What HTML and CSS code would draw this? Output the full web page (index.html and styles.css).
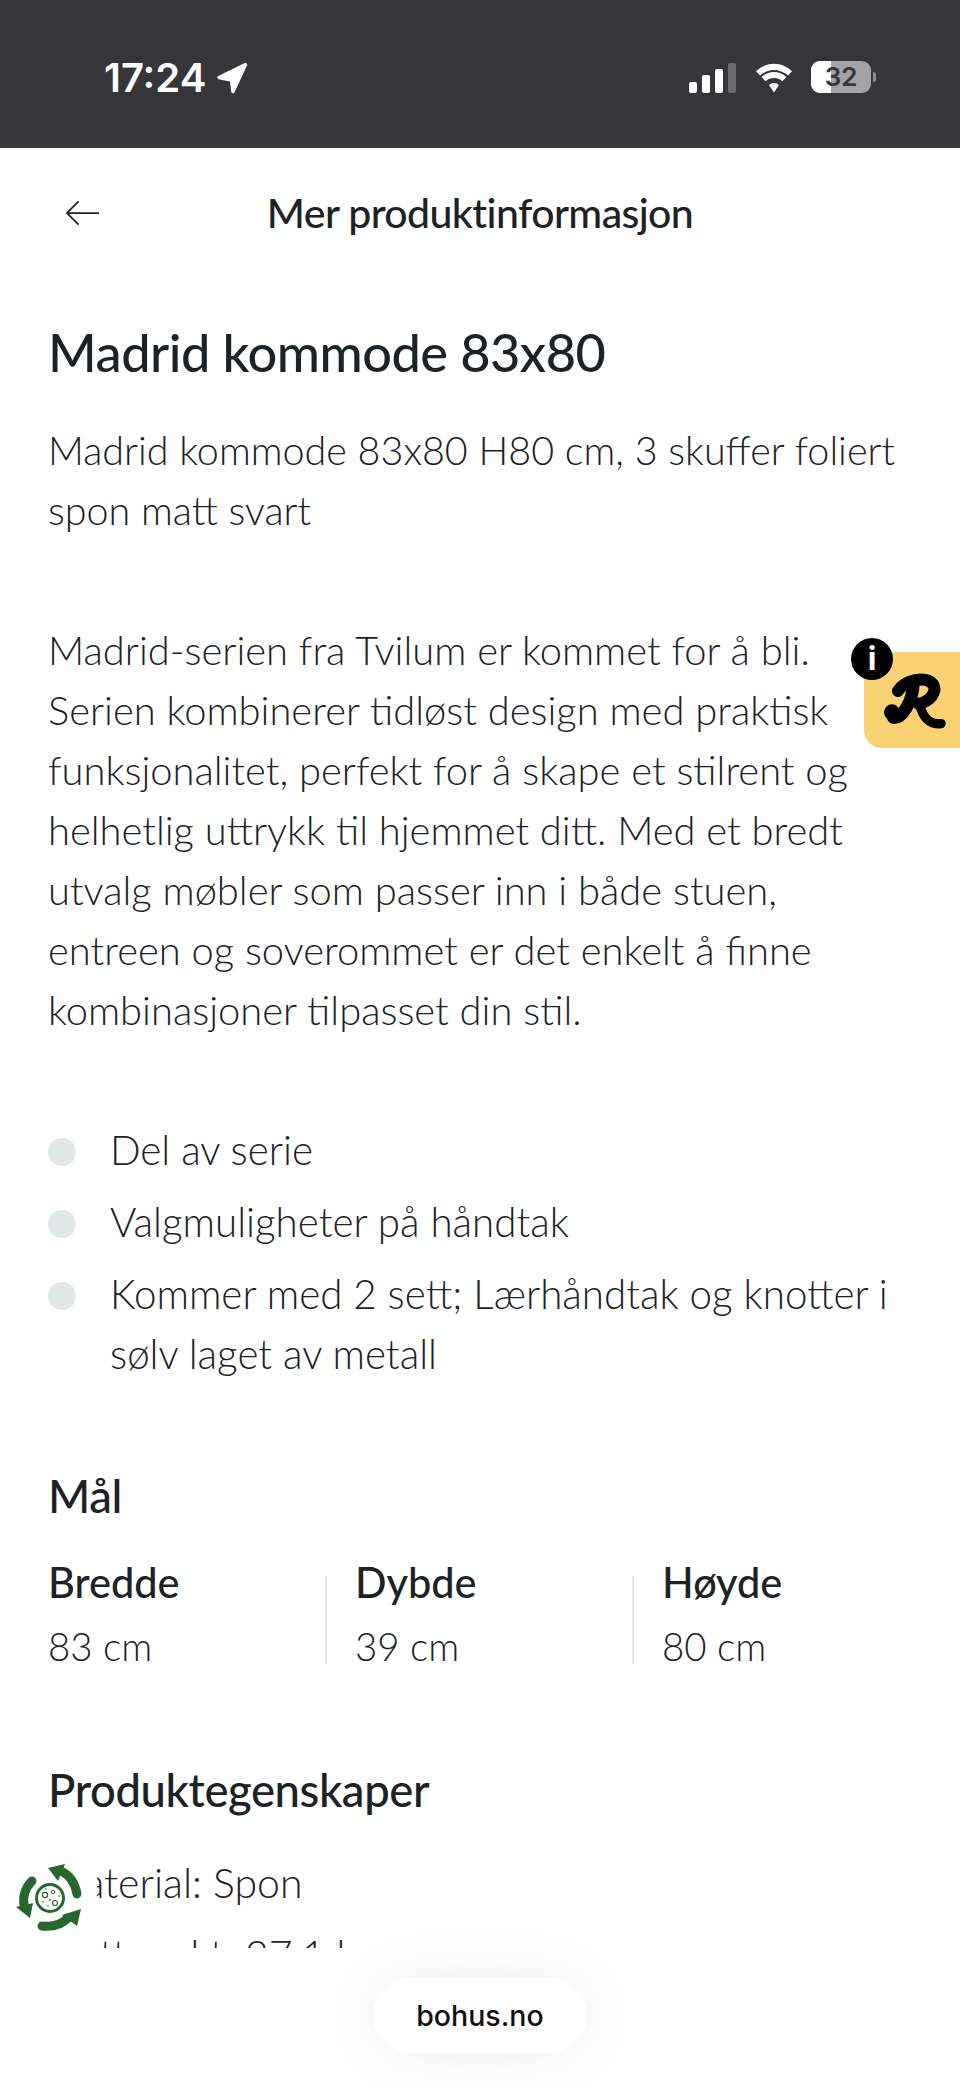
FILE: index.html
```html
<!DOCTYPE html>
<html lang="no">
<head>
<meta charset="utf-8">
<title>Mer produktinformasjon</title>
<link rel="stylesheet" href="styles.css">
</head>
<body>
<div class="phone">
  <div class="status">
    <div class="status-left">
      <span class="time">17:24</span>
      <svg class="loc" viewBox="0 0 32 32"><path d="M29.500 2.500 3 15.500l12.500 2.500 1.500 11.500Z" fill="#fff" stroke="#fff" stroke-width="3.500" stroke-linejoin="round"/></svg>
    </div>
    <div class="status-right">
      <svg class="signal" viewBox="0 0 47 30"><rect x="0" y="19" width="8" height="11" rx="2" fill="#fff"/><rect x="13" y="12" width="8" height="18" rx="2" fill="#fff"/><rect x="26" y="6" width="8" height="24" rx="2" fill="#fff"/><rect x="39" y="0" width="8" height="30" rx="2" fill="#6c6b70"/></svg>
      <svg class="wifi" viewBox="0 0 40 30"><path d="M20 7c5 0 10 2 14 5.500l4-4.200C33 3.500 26.500 .8 20 .8S7 3.500 2 8.300l4 4.200C10 9 15 7 20 7Z" fill="#fff"/><path d="M20 15c3 0 6 1.200 8.400 3.200l4-4.200C28.800 10.700 24.500 9 20 9s-8.800 1.700-12.400 5l4 4.200C14 16.200 17 15 20 15Z" fill="#fff"/><path d="M20 20c-2 0-3.700.7-5 2L20 29.500 25 22c-1.300-1.300-3-2-5-2Z" fill="#fff"/></svg>
      <div class="battery">
        <div class="battery-body"><span class="battery-level"></span><span class="battery-num">32</span></div>
        <span class="battery-cap"></span>
      </div>
    </div>
  </div>

  <header class="topbar">
    <svg class="back" viewBox="0 0 36 26"><path d="M35 13H2M14 1 2 13l12 12" fill="none" stroke="#1c2226" stroke-width="1.800"/></svg>
    <h2 class="topbar-title">Mer produktinformasjon</h2>
  </header>

  <main class="content">
    <h1 class="title">Madrid kommode 83x80</h1>
    <p class="text lead">Madrid kommode 83x80 H80 cm, 3 skuffer foliert spon matt svart</p>
    <p class="text body-copy">Madrid-serien fra Tvilum er kommet for å bli. Serien kombinerer tidløst design med praktisk funksjonalitet, perfekt for å skape et stilrent og helhetlig uttrykk til hjemmet ditt. Med et bredt utvalg møbler som passer inn i både stuen, entreen og soverommet er det enkelt å finne kombinasjoner tilpasset din stil.</p>
    <ul class="bullets">
      <li>Del av serie</li>
      <li>Valgmuligheter på håndtak</li>
      <li>Kommer med 2 sett; Lærhåndtak og knotter i sølv laget av metall</li>
    </ul>
    <h3 class="section">Mål</h3>
    <div class="dims">
      <div class="dim"><div class="dim-label">Bredde</div><div class="dim-value">83 cm</div></div>
      <div class="dim"><div class="dim-label">Dybde</div><div class="dim-value">39 cm</div></div>
      <div class="dim"><div class="dim-label">Høyde</div><div class="dim-value">80 cm</div></div>
    </div>
    <h3 class="section props">Produktegenskaper</h3>
    <p class="text prop">Material: Spon</p>
    <p class="text prop">Nettovekt: 27,1 kg</p>
  </main>

  <footer class="bottom">
    <div class="pill">bohus.no</div>
  </footer>

  <aside class="review-badge">
    <svg class="r-logo" viewBox="185 155 190 180"><g fill="none" stroke="#000" stroke-linecap="round" stroke-linejoin="round"><path d="M230 212C252 178 312 166 335 190 352 214 325 245 292 250" stroke-width="36"/><path d="M276 195C274 240 244 296 216 292" stroke-width="38"/><path d="M296 250C302 285 322 315 360 310" stroke-width="28"/></g><circle cx="212" cy="276" r="24"/></svg>
  </aside>
  <div class="info-dot">i</div>

  <div class="eco-badge">
    <svg class="eco" viewBox="0 0 83 95">
      <g fill="none" stroke="#27662f" stroke-linecap="round">
        <path d="M47 16Q60 22 63 39" stroke-width="9"/>
        <path d="M18 26Q8 36 10 50" stroke-width="9"/>
        <path d="M28 71Q44 73 54 63" stroke-width="9"/>
        <circle cx="36" cy="43" r="13.500" stroke-width="3"/>
        <circle cx="31" cy="40" r="2.600" stroke-width="1.200"/>
        <circle cx="39" cy="37" r="1.800" stroke-width="1"/>
        <circle cx="41" cy="48" r="2.500" stroke-width="1.200"/>
      </g>
      <g fill="#27662f">
        <path d="M34 13 51 9 44 26Z"/>
        <path d="M2 52 19 48 16 63Z"/>
        <path d="M48 60 67 54 63 71Z"/>
        <circle cx="36" cy="45" r=".9"/><circle cx="29" cy="47" r=".8"/><circle cx="34" cy="51" r=".8"/><circle cx="45" cy="41" r=".8"/><circle cx="32" cy="34" r=".8"/>
      </g>
    </svg>
  </div>
</div>
</body>
</html>
```
FILE: styles.css
```css
* { box-sizing: border-box; }
html, body { margin: 0; padding: 0; background: #fff; }
.phone {
  position: relative;
  width: 960px;
  height: 2087px;
  display: flex;
  flex-direction: column;
  overflow: hidden;
  font-family: "Lato", "Liberation Sans", sans-serif;
  color: #1c2226;
}
.status {
  height: 148px;
  flex: none;
  background: #36353a;
  display: flex;
  justify-content: space-between;
  padding: 57px 84px 0 104px;
}
.status-left { display: flex; align-items: flex-start; gap: 10px; }
.time {
  font-family: "Inter", "Liberation Sans", sans-serif;
  font-weight: 600;
  font-size: 40px;
  line-height: 42px;
  color: #fff;
}
.loc { width: 32px; height: 32px; margin-top: 5px; }
.status-right { display: flex; align-items: flex-start; padding-top: 4px; }
.signal { width: 47px; height: 30px; margin-top: 2px; margin-right: 18px; }
.wifi { width: 40px; height: 30px; margin-top: 2px; margin-right: 17px; }
.battery { display: flex; align-items: center; gap: 2px; }
.battery-body {
  position: relative;
  width: 60px;
  height: 32px;
  border-radius: 9px;
  background: #a3a2a6;
  overflow: hidden;
  text-align: center;
}
.battery-level { position: absolute; left: 0; top: 0; bottom: 0; width: 20px; background: #fff; }
.battery-num {
  position: relative;
  font-family: "Inter", "Liberation Sans", sans-serif;
  font-weight: 600;
  font-size: 26px;
  line-height: 32px;
  color: #36353a;
}
.battery-cap { width: 3px; height: 10px; background: #8d8c90; border-radius: 0 3px 3px 0; }

.topbar {
  flex: none;
  height: 130px;
  position: relative;
  display: flex;
  align-items: center;
  justify-content: center;
}
.back { position: absolute; left: 65px; top: 52px; width: 35px; height: 26px; }
.topbar-title { margin: 0; font-size: 41px; font-weight: 500; letter-spacing: -0.6px; line-height: 50px; }

.content {
  flex: 1;
  min-height: 0;
  overflow: hidden;
  padding: 42px 48px 0;
}
.title { margin: 0 0 36px; font-size: 52.300px; line-height: 64px; font-weight: 500; letter-spacing: -0.5px; }
.text { margin: 0; font-size: 39.500px; line-height: 60px; font-weight: 300; }
.lead { margin-bottom: 80px; }
.body-copy { margin-bottom: 80px; font-size: 39.900px; }
.bullets { list-style: none; margin: 0; padding: 0; font-size: 40.300px; line-height: 60px; font-weight: 300; }
.bullets li { position: relative; padding-left: 62px; margin-bottom: 12px; }
.bullets li::before {
  content: "";
  position: absolute;
  left: 0;
  top: 18px;
  width: 28px;
  height: 28px;
  border-radius: 50%;
  background: #dfe7e7;
}
.section { margin: 0; font-size: 45.400px; line-height: 56px; font-weight: 500; letter-spacing: -0.4px; }
.bullets + .section { margin-top: 84px; }
.dims { display: grid; grid-template-columns: 277px 307px 1fr; margin-top: 34px; }
.dim { position: relative; }
.dim + .dim { padding-left: 30px; }
.dim + .dim::before {
  content: "";
  position: absolute;
  left: 0;
  top: 18px;
  bottom: 12px;
  width: 2px;
  background: #e1e4e4;
}
.dim-label { font-size: 41.500px; line-height: 48px; font-weight: 500; }
.dim-value { font-size: 38.500px; line-height: 60px; font-weight: 300; margin-top: 10px; }
.props { margin-top: 86px; margin-bottom: 35px; }
.prop { margin-bottom: 12px; font-size: 41px; }

.bottom {
  flex: none;
  height: 139px;
  background: #fff;
  display: flex;
  justify-content: center;
  padding-top: 30px;
}
.pill {
  width: 214px;
  height: 75px;
  border-radius: 38px;
  background: #fff;
  box-shadow: 0 0 60px rgba(0, 0, 0, 0.07);
  display: flex;
  align-items: center;
  justify-content: center;
  font-family: "Inter", "Liberation Sans", sans-serif;
  font-weight: 500;
  font-size: 28.500px;
  color: #111;
}

.review-badge {
  position: absolute;
  right: 0;
  top: 652px;
  width: 96px;
  height: 96px;
  background: #fbd273;
  border-radius: 14px 0 0 18px;
  display: flex;
}
.r-logo { width: 63px; height: 60px; margin: 20px 0 0 19px; }
.info-dot {
  position: absolute;
  left: 851px;
  top: 638px;
  width: 42px;
  height: 42px;
  border-radius: 50%;
  background: #000;
  color: #fff;
  font-family: "Inter", "Liberation Sans", sans-serif;
  font-weight: 700;
  font-size: 32px;
  line-height: 42px;
  text-align: center;
}
.eco-badge {
  position: absolute;
  left: 14px;
  top: 1855px;
  width: 83px;
  height: 95px;
  background: #fff;
}
.eco { width: 83px; height: 95px; display: block; }
```
